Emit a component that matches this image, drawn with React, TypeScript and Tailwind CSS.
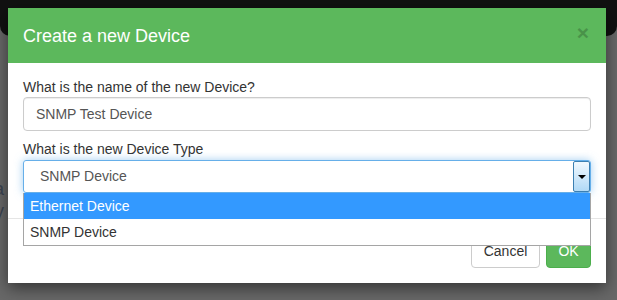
import React from "react";

export default function App() {
  const font = { fontFamily: '"Liberation Sans", Arial, sans-serif' };
  return (
    <div className="relative w-[617px] h-[300px] overflow-hidden bg-[#686868]" style={font}>
      {/* page behind overlay */}
      <div className="h-[36px] bg-[#111111] rounded-b-[10px]" />
      <div className="pt-[142px] text-[18px] leading-[22px] text-[#3b4452]">
        <div className="-ml-[6px]">a</div>
        <div className="-ml-[5px]">y</div>
      </div>

      {/* modal */}
      <div className="absolute left-[8px] top-[8px] w-[598px] bg-white shadow-[0_5px_15px_rgba(0,0,0,0.5)]">
        <div className="h-[55px] bg-[#5cb85c] px-[15px] flex items-center justify-between">
          <span className="text-white text-[18px] leading-[26px]">Create a new Device</span>
          <span className="text-[21px] font-bold leading-none text-[#000] opacity-20 mr-[2px] -mt-[6px]">×</span>
        </div>
        <div className="relative px-[15px] pt-[15px] pb-[25px] text-[14px] text-[#333]">
          <div className="leading-[19px]">What is the name of the new Device?</div>
          <div className="h-[34px] border border-[#cccccc] rounded-[4px] flex items-center px-[12px] text-[#555] shadow-[inset_0_1px_1px_rgba(0,0,0,0.075)]">
            SNMP Test Device
          </div>
          <div className="leading-[19px] mt-[9px]">What is the new Device Type</div>
          <div className="relative mt-[1px] h-[33px] border border-[#66afe9] rounded-[3px] shadow-[0_0_8px_rgba(102,175,233,0.6)] flex items-center pl-[16px] text-[#555]">
            SNMP Device
            <div className="absolute right-0 top-0 bottom-0 w-[17px] border border-[#3c7fb1] rounded-[2px] bg-gradient-to-b from-[#f2f9fe] to-[#b0d9f6] flex items-center justify-center">
              <div className="w-0 h-0 border-l-[4px] border-r-[4px] border-t-[4px] border-l-transparent border-r-transparent border-t-black" />
            </div>
          </div>
          <div className="absolute left-[15px] right-[15px] top-[130px] z-10 bg-white border border-[#a5a5a5] border-t-0 text-[14px]">
            <div className="h-[26px] bg-[#3399ff] text-white flex items-center pl-[6px]">Ethernet Device</div>
            <div className="h-[26px] text-[#333] flex items-center pl-[6px]">SNMP Device</div>
          </div>
        </div>
        <div className="border-t border-[#e5e5e5] p-[15px] flex justify-end gap-[6px]">
          <button className="h-[34px] w-[69px] border border-[#cccccc] rounded-[4px] bg-white text-[#333] text-[14px]" style={font}>
            Cancel
          </button>
          <button className="h-[34px] w-[45px] border border-[#4cae4c] rounded-[4px] bg-[#5cb85c] text-white text-[14px]" style={font}>
            OK
          </button>
        </div>
      </div>
    </div>
  );
}
